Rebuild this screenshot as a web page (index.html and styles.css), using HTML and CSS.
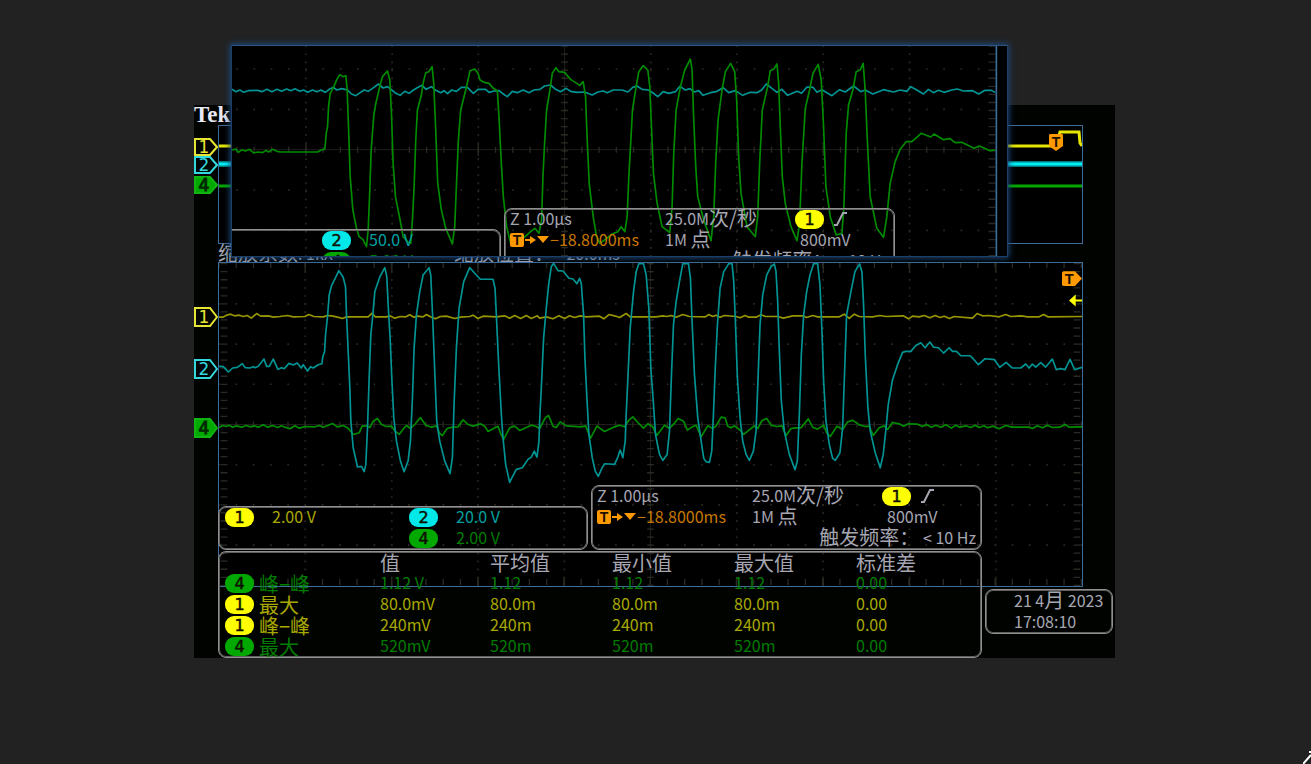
FILE: index.html
```html
<!DOCTYPE html>
<html lang="zh-CN">

<head>
    <meta charset="UTF-8">
    <meta name="viewport" content="width=device-width, initial-scale=1.0">
    <title>Tek</title>
    <link rel="stylesheet" href="styles.css">
</head>

<body>

    <main class="scope">

        <h1 class="brand">Tek</h1>

        <!-- full record -->
        <section class="row overview">
            <svg class="gutter" viewBox="0 0 24 119">
                <g class="marker marker-1"><path d="M1 14h15l7 8-7 8H1z" /><text x="10" y="28">1</text></g>
                <g class="marker marker-2"><path d="M1 32h15l7 8-7 8H1z" /><text x="10" y="46">2</text></g>
                <g class="marker marker-4"><path d="M1 52h15l7 8-7 8H1z" /><text x="10" y="66">4</text></g>
            </svg>
            <div class="plot">
                <svg viewBox="0 0 863 117" preserveAspectRatio="none">
                    <path class="ov ov-1" d="M0 20H837L841 6H860L861 17 863 20" />
                    <path class="ov ov-2-soft" d="M0 38H863" />
                    <path class="ov ov-2" d="M0 38H863" />
                    <path class="ov ov-4" d="M0 60H863" />
                    <path class="trig" d="M830 9q0-1 2-1h10q2 0 2 1v11l-7 5-7-5z" />
                    <text class="trig-t" x="837" y="21">T</text>
                </svg>
            </div>
        </section>

        <p class="caption"><span><b>缩放系数</b>: 1kX</span><span><b>缩放位置：</b> −20.0ms</span></p>

        <!-- zoomed part -->
        <section class="row zoomed">
            <svg class="gutter" viewBox="0 0 24 325">
                <g class="marker marker-1"><path d="M1 46h15l7 9-7 9H1z" /><text x="10" y="61">1</text></g>
                <g class="marker marker-2"><path d="M1 98h15l7 9-7 9H1z" /><text x="10" y="113">2</text></g>
                <g class="marker marker-4"><path d="M1 157h15l7 9-7 9H1z" /><text x="10" y="172">4</text></g>
            </svg>
            <div class="plot">
                <svg viewBox="87 24 2592 972" preserveAspectRatio="none">
                    <path class="dots-v" d="M346 24V996M606 24V996M865 24V996M1124 24V996M1383 24V996M1642 24V996M1902 24V996M2161 24V996M2420 24V996" />
                    <path class="dots-h" d="M85 147H2679M85 268H2679M85 389H2679M85 631H2679M85 752H2679M85 873H2679" />
                    <path class="axis" d="M87 510H2679M1383 24V996" />
                    <path class="ticks-h" d="M85 510H2679M85 30H2679M85 984H2679" />
                    <path class="ticks-v" d="M1383 24V996M102 24V996M2664 24V996" />
                    <path class="ticks-big" d="M346 24v26M606 24v26M865 24v26M1124 24v26M1642 24v26M1902 24v26M2161 24v26M2420 24v26M346 498v26M606 498v26M865 498v26M1124 498v26M1642 498v26M1902 498v26M2161 498v26M2420 498v26M346 970v26M606 970v26M865 970v26M1124 970v26M1642 970v26M1902 970v26M2161 970v26M2420 970v26" />
                    <polyline class="trace trace-1" points="87,187 98,187 110,181 122,178 133,183 148,181 160,185 172,182 184,190 200,176 212,184 235,183 250,187 270,185 292,182 310,186 345,185 357,179 372,185 400,186 413,182 425,183 440,186 458,191 470,186 535,186 547,175 556,186 590,186 600,183 615,190 632,185 648,186 660,180 672,187 684,184 700,186 710,179 722,186 737,192 752,185 770,184 795,191 812,187 840,185 850,181 865,191 880,184 920,186 945,183 960,190 975,182 993,191 1010,182 1025,191 1043,183 1050,190 1070,186 1090,192 1108,183 1125,191 1140,183 1155,188 1172,183 1190,186 1230,184 1243,192 1258,179 1275,183 1290,188 1310,176 1322,186 1400,186 1420,183 1432,185 1445,182 1460,187 1480,179 1500,185 1548,186 1558,179 1570,185 1580,181 1592,187 1605,182 1640,185 1652,189 1667,182 1678,187 1700,187 1715,180 1728,185 1765,185 1782,190 1810,183 1840,183 1852,188 1870,182 1885,186 1950,186 1965,178 1980,191 1995,178 2010,185 2050,186 2072,182 2090,185 2142,183 2158,192 2170,184 2190,186 2205,182 2222,189 2238,182 2253,188 2265,184 2281,191 2295,185 2350,190 2364,176 2380,183 2400,182 2430,186 2450,179 2465,185 2498,183 2515,186 2550,186 2564,179 2576,186 2679,185" />
                    <polyline class="trace trace-4" points="87,519 98,513 108,516 117,512 128,518 140,514 155,518 168,513 180,517 193,514 205,518 220,511 233,518 248,513 263,519 275,514 285,518 300,523 315,514 328,521 345,516 375,517 388,513 400,518 415,512 428,507 442,517 460,513 475,521 490,540 508,535 517,515 530,514 540,519 550,500 563,492 575,510 590,516 605,515 617,531 628,540 640,524 650,513 662,522 675,510 692,489 708,512 725,518 740,514 750,537 758,543 772,522 788,518 805,517 820,496 835,510 850,515 872,508 885,515 895,531 910,523 925,515 934,540 942,555 960,520 975,515 990,528 1010,519 1025,512 1040,516 1050,522 1067,490 1077,483 1090,515 1100,519 1112,502 1130,514 1175,517 1188,514 1203,551 1222,515 1245,531 1272,518 1290,512 1305,517 1318,497 1330,487 1345,504 1362,521 1375,508 1390,517 1402,543 1425,512 1440,522 1455,506 1466,492 1482,500 1494,527 1508,517 1520,512 1535,547 1555,514 1570,522 1580,514 1595,488 1607,490 1615,515 1625,520 1635,514 1650,525 1663,540 1680,526 1694,514 1705,522 1718,498 1732,492 1745,512 1762,516 1778,514 1790,544 1805,522 1820,520 1835,520 1857,493 1870,518 1885,524 1903,512 1912,535 1923,546 1943,515 1960,525 1975,502 1990,497 2010,511 2028,516 2040,515 2052,543 2070,520 2085,514 2095,525 2110,504 2130,508 2143,515 2157,508 2185,509 2200,516 2212,510 2226,518 2240,512 2255,518 2270,511 2287,521 2300,512 2312,518 2330,514 2345,519 2358,512 2370,519 2385,514 2395,520 2412,515 2430,523 2450,513 2468,518 2520,518 2530,522 2545,514 2560,520 2575,512 2590,519 2612,518 2628,510 2640,518 2679,517" />
                    <polyline class="trace trace-2" points="87,335 100,336 115,352 128,340 142,338 157,327 166,339 180,340 190,336 195,339 205,335 213,325 222,313 230,335 238,335 250,313 264,344 275,339 283,342 297,326 310,331 322,325 334,340 340,330 353,349 362,336 370,340 385,330 396,327 399,305 404,292 407,240 413,185 418,120 425,92 434,74 447,47 460,67 467,95 470,180 475,290 480,400 483,500 490,580 503,638 515,636 523,652 528,630 533,520 538,370 543,240 549,180 555,110 570,66 585,38 591,65 595,150 601,250 606,370 612,490 620,560 632,620 643,652 655,620 662,560 668,430 673,280 680,180 690,110 700,60 718,38 723,60 728,170 735,350 741,500 750,560 765,620 781,658 788,610 793,450 800,280 808,160 822,80 840,38 855,55 872,73 890,73 910,73 916,100 920,180 927,330 935,480 940,550 948,630 960,684 967,670 980,645 998,640 1015,615 1025,608 1034,590 1042,608 1048,560 1050,500 1056,380 1062,250 1070,160 1077,90 1085,35 1092,25 1105,47 1120,48 1138,70 1150,72 1162,86 1170,70 1175,85 1182,180 1186,310 1192,430 1198,540 1208,610 1217,650 1226,666 1238,640 1245,628 1275,630 1285,608 1292,587 1300,610 1307,560 1310,480 1316,350 1322,220 1332,110 1340,50 1348,26 1362,26 1370,60 1378,160 1384,340 1392,450 1398,540 1410,600 1420,618 1433,600 1440,530 1446,360 1452,210 1460,140 1470,80 1480,26 1497,26 1503,70 1507,180 1515,360 1525,490 1535,560 1543,612 1550,622 1560,624 1567,590 1572,480 1578,330 1584,210 1592,100 1603,50 1618,26 1628,26 1633,80 1638,200 1644,370 1652,490 1660,560 1670,600 1680,618 1692,590 1700,530 1706,370 1712,210 1720,120 1732,60 1745,35 1755,27 1760,50 1765,140 1770,290 1776,440 1785,530 1800,600 1817,646 1824,620 1830,480 1836,300 1843,180 1852,110 1862,60 1873,26 1885,26 1892,90 1898,230 1903,380 1910,500 1920,570 1930,612 1938,618 1952,595 1960,520 1966,350 1972,180 1985,110 1997,50 2011,27 2018,50 2023,150 2028,300 2036,460 2043,530 2058,595 2073,640 2082,600 2090,525 2097,450 2110,375 2125,330 2140,293 2150,290 2165,290 2180,272 2195,264 2208,279 2222,262 2233,277 2248,279 2263,295 2280,279 2290,290 2302,290 2315,303 2343,303 2352,312 2368,330 2388,312 2416,315 2432,338 2451,323 2470,340 2495,340 2510,328 2520,340 2530,328 2540,337 2555,324 2570,337 2590,313 2602,345 2615,342 2628,345 2643,314 2657,345 2679,338" />
                    <path class="trig" d="M2619 54q0-5 5-5h34l21 22-21 22h-34q-5 0-5-5z" />
                    <text class="trig-t trig-t-big" x="2641" y="87">T</text>
                    <path class="level" d="M2640 137l20-18v15h19v6h-19v15z" />
                </svg>
            </div>
        </section>

        <div class="panels">
            <div class="readouts">
                <dl class="box channels">
                    <dt class="badge badge-1">1</dt><dd class="ch-1">2.00 V</dd>
                    <dt class="badge badge-2">2</dt><dd class="ch-2">20.0 V</dd>
                    <dt class="badge badge-4">4</dt><dd class="ch-4">2.00 V</dd>
                </dl>
                <div class="box timebase">
                    <span>Z 1.00µs</span><span>25.0M<b>次/秒</b></span>
                    <span class="source"><i class="badge badge-1">1</i><svg width="16" height="16" viewBox="0 0 16 16"><path class="edge" d="M1 14h3L10 2h4" /></svg></span>
                    <span class="delay"><svg width="40" height="16" viewBox="0 0 40 16"><rect class="trig" x="0" y="1" width="14" height="14" rx="2" /><text class="trig-t" x="7" y="13">T</text><path class="trig" d="M15 7h5V4l6 4-6 4V9h-5zM27 4h12l-6 7z" /></svg>−18.8000ms</span><span>1M <b>点</b></span><span class="level-value">800mV</span>
                    <span class="freq"><b>触发频率：</b> &lt; 10 Hz</span>
                </div>
            </div>
            <div class="bottom">
                <table class="box measure">
                    <colgroup>
                        <col class="col-name">
                        <col class="col-value">
                        <col span="3" class="col-stat">
                        <col>
                    </colgroup>
                    <thead>
                        <tr><td></td><th>值</th><th>平均值</th><th>最小值</th><th>最大值</th><th>标准差</th></tr>
                    </thead>
                    <tbody>
                        <tr class="ch-4"><th><i class="badge badge-4">4</i>峰−峰</th><td>1.12 V</td><td>1.12</td><td>1.12</td><td>1.12</td><td>0.00</td></tr>
                        <tr class="ch-1"><th><i class="badge badge-1">1</i>最大</th><td>80.0mV</td><td>80.0m</td><td>80.0m</td><td>80.0m</td><td>0.00</td></tr>
                        <tr class="ch-1"><th><i class="badge badge-1">1</i>峰−峰</th><td>240mV</td><td>240m</td><td>240m</td><td>240m</td><td>0.00</td></tr>
                        <tr class="ch-4"><th><i class="badge badge-4">4</i>最大</th><td>520mV</td><td>520m</td><td>520m</td><td>520m</td><td>0.00</td></tr>
                    </tbody>
                </table>
                <div class="box clock"><span>21 4<b>月</b> 2023</span><span>17:08:10</span></div>
            </div>
        </div>

        <!-- second capture laid over the screen -->
        <section class="overlay">
            <div class="clip">
                <svg class="clip-plot" viewBox="123 48 2328 630" preserveAspectRatio="none">
                    <path class="dots-v" d="M345 46V678M604 46V678M863 46V678M1122 46V678M1381 46V678M1640 46V678M1899 46V678M2158 46V678" />
                    <path class="dots-h" d="M84 117H2416M84 238H2416M84 480H2416M84 601H2416" />
                    <path class="axis" d="M123 359H2416M1122 48V678" />
                    <path class="ticks-h" d="M84 359H2416" />
                    <path class="ticks-v" d="M1122 46V678M2406 46V678" />
                    <path class="ticks-big" d="M345 340v38M604 340v38M863 340v38M1381 340v38M1640 340v38M1899 340v38M2158 340v38" />
                    <polyline class="trace trace-2" points="123,178 135,185 147,180 158,187 172,182 200,181 213,185 228,178 243,185 258,178 272,184 287,177 300,182 312,176 327,184 338,180 350,187 365,180 378,185 390,180 403,187 418,176 428,172 438,180 452,176 470,180 482,192 495,197 508,188 520,180 532,184 545,175 563,162 577,174 590,170 603,180 615,190 628,196 642,184 655,190 668,180 682,172 694,166 706,178 722,170 735,181 750,188 760,182 770,191 783,180 797,184 812,172 830,172 848,190 862,178 885,178 895,187 910,183 925,182 938,192 950,200 965,184 980,188 998,180 1015,188 1030,180 1048,178 1062,168 1080,165 1095,178 1110,185 1127,175 1140,184 1160,187 1182,186 1205,195 1222,186 1238,183 1250,188 1268,180 1295,180 1312,186 1327,172 1340,168 1355,178 1375,180 1392,192 1402,200 1418,185 1435,190 1455,185 1468,169 1485,180 1498,176 1512,186 1525,182 1538,196 1560,188 1580,184 1598,173 1615,188 1635,182 1657,196 1680,187 1700,188 1714,180 1728,162 1745,175 1760,187 1775,178 1792,196 1820,184 1834,190 1850,171 1868,172 1880,187 1895,179 1925,197 1948,179 1965,186 1990,168 2012,185 2025,180 2048,192 2080,179 2110,186 2130,180 2150,184 2162,170 2180,180 2200,192 2215,178 2230,188 2245,181 2262,187 2285,180 2302,177 2320,183 2348,182 2366,192 2385,181 2405,181 2416,188" />
                    <polyline class="trace trace-4" points="123,360 134,357 142,367 153,359 163,363 176,358 188,369 200,366 215,368 225,361 233,366 245,358 258,364 270,366 380,366 390,361 402,357 406,310 410,290 413,230 418,190 428,172 438,148 447,134 456,140 465,137 469,180 473,290 478,440 486,540 497,595 505,620 516,628 527,650 532,600 537,480 541,360 549,255 555,220 568,165 575,140 590,123 597,150 602,250 607,400 614,500 628,570 637,620 650,635 660,640 665,570 670,470 675,330 680,240 692,195 697,160 705,128 714,125 724,110 729,160 735,300 741,460 752,540 765,595 785,642 792,590 797,470 803,330 810,240 825,180 832,150 838,122 852,117 862,130 868,150 880,157 895,160 908,175 920,182 925,260 932,400 938,500 948,590 960,640 990,632 1020,605 1033,595 1045,610 1053,570 1057,440 1062,340 1068,240 1078,180 1085,130 1096,113 1105,125 1122,127 1140,148 1168,166 1178,155 1185,200 1190,330 1196,460 1208,560 1218,620 1228,640 1242,630 1265,612 1282,605 1292,590 1303,605 1310,560 1315,440 1320,350 1326,240 1337,170 1345,125 1358,107 1372,120 1378,170 1383,290 1389,430 1400,520 1415,590 1438,608 1445,530 1450,370 1457,240 1470,170 1483,120 1500,87 1505,120 1510,270 1516,410 1522,500 1540,570 1562,632 1570,560 1576,400 1583,270 1595,180 1605,125 1621,100 1633,125 1639,210 1645,380 1652,490 1670,590 1695,620 1702,560 1708,400 1716,240 1732,170 1740,122 1750,118 1760,102 1765,160 1770,290 1776,440 1785,520 1802,590 1820,632 1828,580 1835,400 1845,235 1858,180 1868,130 1884,103 1893,150 1900,290 1907,470 1920,560 1938,615 1955,610 1961,530 1968,310 1975,225 1988,180 1998,125 2010,120 2019,100 2025,180 2031,320 2040,500 2060,595 2080,622 2090,560 2100,460 2115,395 2130,358 2148,335 2165,335 2180,322 2193,310 2222,321 2232,312 2260,329 2280,326 2295,338 2315,337 2352,355 2368,348 2400,362 2416,360" />
                    <path class="frame" d="M2419 48V678" />
                </svg>
                <div class="readouts">
                    <dl class="box channels">
                        <dt class="badge badge-2">2</dt><dd class="ch-2">50.0 V</dd>
                        <dt class="badge badge-4">4</dt><dd class="ch-4">5.00 V</dd>
                    </dl>
                    <div class="box timebase">
                        <span>Z 1.00µs</span><span>25.0M<b>次/秒</b></span>
                        <span class="source"><i class="badge badge-1">1</i><svg width="16" height="16" viewBox="0 0 16 16"><path class="edge" d="M1 14h3L10 2h4" /></svg></span>
                        <span class="delay"><svg width="40" height="16" viewBox="0 0 40 16"><rect class="trig" x="0" y="1" width="14" height="14" rx="2" /><text class="trig-t" x="7" y="13">T</text><path class="trig" d="M15 7h5V4l6 4-6 4V9h-5zM27 4h12l-6 7z" /></svg>−18.8000ms</span><span>1M <b>点</b></span><span class="level-value">800mV</span>
                        <span class="freq"><b>触发频率：</b> &lt; 10 Hz</span>
                    </div>
                </div>
            </div>
        </section>

    </main>

    <svg class="corner" width="8" height="13" viewBox="0 0 8 13"><path d="M0 13L8 4M6 1h2" /></svg>

</body>

</html>
```
FILE: styles.css
```css
* {
    box-sizing: border-box;
}

html,
body {
    margin: 0;
    height: 100%;
}

body {
    position: relative;
    display: flex;
    align-items: center;
    justify-content: center;
    overflow: hidden;
    padding: 0 2px 1px 0;
    background-color: #222;
    color: #a6a6b2;
    font-family: "Noto Sans CJK SC", sans-serif;
    font-size: 16px;
    line-height: 19px;
}

b,
i,
th {
    font-weight: normal;
    font-style: normal;
}

b {
    font-size: 20px;
    line-height: 0;
    vertical-align: -1px;
}

svg {
    display: block;
}

.scope {
    position: relative;
    width: 100%;
    max-width: 921px;
    padding-bottom: 71px;
    background-color: #000300;
}

.brand {
    height: 20px;
    margin: 0;
    color: #e8e8f4;
    font-family: "Liberation Serif", serif;
    font-size: 23px;
    font-weight: bold;
    line-height: 20px;
}

.row {
    display: flex;
    padding-right: 32px;
}

.gutter {
    flex: none;
    width: 24px;
}

.overview,
.overview .gutter {
    height: 119px;
}

.zoomed,
.zoomed .gutter {
    height: 325px;
}

.plot {
    flex: 1;
    border: 1px solid #3f6d99;
    background-color: #000;
}

.plot svg {
    width: 100%;
    height: 100%;
}

.caption {
    display: flex;
    height: 18px;
    margin: 0 0 0 24px;
    line-height: 18px;
    white-space: nowrap;
}

.caption span {
    width: 236px;
}

/* channel markers */
.marker text {
    font: 17px "DejaVu Sans", sans-serif;
    stroke-width: 1;
    text-anchor: middle;
}

.marker path {
    stroke-width: 2;
}

.marker-1 path {
    fill: #050500;
    stroke: #e6e632;
}

.marker-1 text {
    fill: #e6e632;
}

.marker-2 path {
    fill: #000505;
    stroke: #32d8dc;
}

.marker-2 text {
    fill: #32d8dc;
}

.marker-4 path {
    fill: #00a800;
    stroke: #12b412;
}

.marker-4 text {
    fill: #002800;
    stroke: #002800;
}

/* traces */
.ov {
    fill: none;
    stroke-width: 3;
}

.ov-1 {
    stroke: #e6e600;
}

.ov-2-soft {
    stroke: #007a80;
    stroke-width: 6;
}

.ov-2 {
    stroke: #00f0f4;
}

.ov-4 {
    stroke: #00a800;
}

.trace {
    fill: none;
    stroke-width: 5;
    stroke-linejoin: round;
}

.trace-1 {
    stroke: #969600;
}

.trace-2 {
    stroke: #009494;
}

.trace-4 {
    stroke: #008c00;
}

/* graticule */
.dots-v,
.dots-h,
.axis,
.ticks-h,
.ticks-v,
.ticks-big {
    fill: none;
    stroke: #2a2a24;
}

.dots-v {
    stroke-width: 5;
    stroke-dasharray: 5 19.2;
}

.dots-h {
    stroke-width: 5;
    stroke-dasharray: 5 46.8;
}

.axis {
    stroke: #1e1e1a;
    stroke-width: 3;
}

.ticks-h {
    stroke-width: 18;
    stroke-dasharray: 4 47.8;
}

.ticks-v {
    stroke-width: 20;
    stroke-dasharray: 4 20.2;
}

.ticks-big {
    stroke-width: 4;
}

.frame {
    stroke: #3f6d99;
    stroke-width: 5;
}

.trig {
    fill: #ff9900;
}

.trig-t {
    fill: #201000;
    font: bold 14px "Liberation Sans", sans-serif;
    text-anchor: middle;
}

.trig-t-big {
    font-size: 44px;
}

.level {
    fill: #ff0;
}

.edge {
    fill: none;
    stroke: #a6a6b2;
    stroke-width: 2;
}

/* readouts */
.panels {
    position: absolute;
    bottom: 0;
    left: 24px;
}

.readouts {
    display: flex;
    align-items: flex-end;
    gap: 3px;
    margin-bottom: 1px;
}

.box {
    margin: 0;
    border: 1px solid #909090;
    border-radius: 8px;
    box-shadow: inset 0 0 0 1px #606060;
    white-space: nowrap;
}

.badge {
    width: 29px;
    height: 19px;
    margin-top: 1px;
    border-radius: 9px;
    color: #101000;
    font-family: "DejaVu Sans", sans-serif;
    font-size: 16px;
    line-height: 19px;
    text-align: center;
    -webkit-text-stroke: 0.5px #101000;
}

.badge-1 {
    background-color: #ff0;
}

.badge-2 {
    background-color: #00e8e8;
}

.badge-4 {
    background-color: #00a800;
}

.ch-1 {
    color: #a8a800;
}

.ch-2 {
    color: #00a0a0;
}

.ch-4 {
    color: #007c00;
}

.channels {
    display: grid;
    grid-template-columns: 47px 137px 47px 1fr;
    grid-auto-rows: 21px;
    width: 370px;
    padding-left: 6px;
}

.channels dd {
    margin: 0;
}

.channels .badge-2 {
    grid-area: 1 / 3;
}

.channels .ch-2 {
    grid-area: 1 / 4;
}

.channels .badge-4 {
    grid-area: 2 / 3;
}

.channels .ch-4 {
    grid-area: 2 / 4;
}

.timebase {
    display: grid;
    grid-template-columns: 155px 130px 1fr;
    grid-auto-rows: 21px;
    width: 391px;
    padding-left: 5px;
}

.source,
.delay {
    display: flex;
    align-items: flex-start;
}

.source {
    gap: 9px;
}

.source svg,
.delay svg {
    margin-top: 2px;
}

.delay {
    color: #c87800;
}

.level-value {
    padding-left: 5px;
}

.freq {
    grid-column: 1 / 4;
    padding-right: 5px;
    text-align: right;
}

.bottom {
    display: flex;
    align-items: flex-end;
    gap: 3px;
}

.measure {
    width: 764px;
    table-layout: fixed;
    border-spacing: 0;
    text-align: left;
}

.measure th,
.measure td {
    height: 21px;
    padding: 0;
    vertical-align: top;
}

.measure th {
    font-size: 20px;
    line-height: 21px;
}

.measure .badge {
    display: inline-block;
    margin: 1px 5px 1px 6px;
    vertical-align: top;
}

.col-name {
    width: 161px;
}

.col-value {
    width: 110px;
}

.col-stat {
    width: 122px;
}

.clock {
    display: grid;
    grid-auto-rows: 21px;
    width: 128px;
    margin-bottom: 24px;
    padding: 1px 0 0 28px;
}

/* floating capture */
.overlay {
    position: absolute;
    top: -60px;
    left: 37px;
    right: 107px;
    border: 1px solid #1d3f68;
    border-top-color: #2a5484;
    box-shadow: 0 0 6px 1px #1c4a80;
}

.clip {
    position: relative;
    height: 210px;
    overflow: hidden;
    background-color: #000;
}

.clip-plot {
    width: 100%;
    height: 100%;
}

/* the left readout is cut off by the window edge */
.clip .readouts {
    position: absolute;
    top: 162px;
    left: -101px;
    align-items: flex-start;
}

.clip .channels {
    margin-top: 21px;
}

.corner {
    position: absolute;
    right: 0;
    bottom: 0;
}

.corner path {
    fill: none;
    stroke: #fff;
    stroke-width: 2;
}
```
